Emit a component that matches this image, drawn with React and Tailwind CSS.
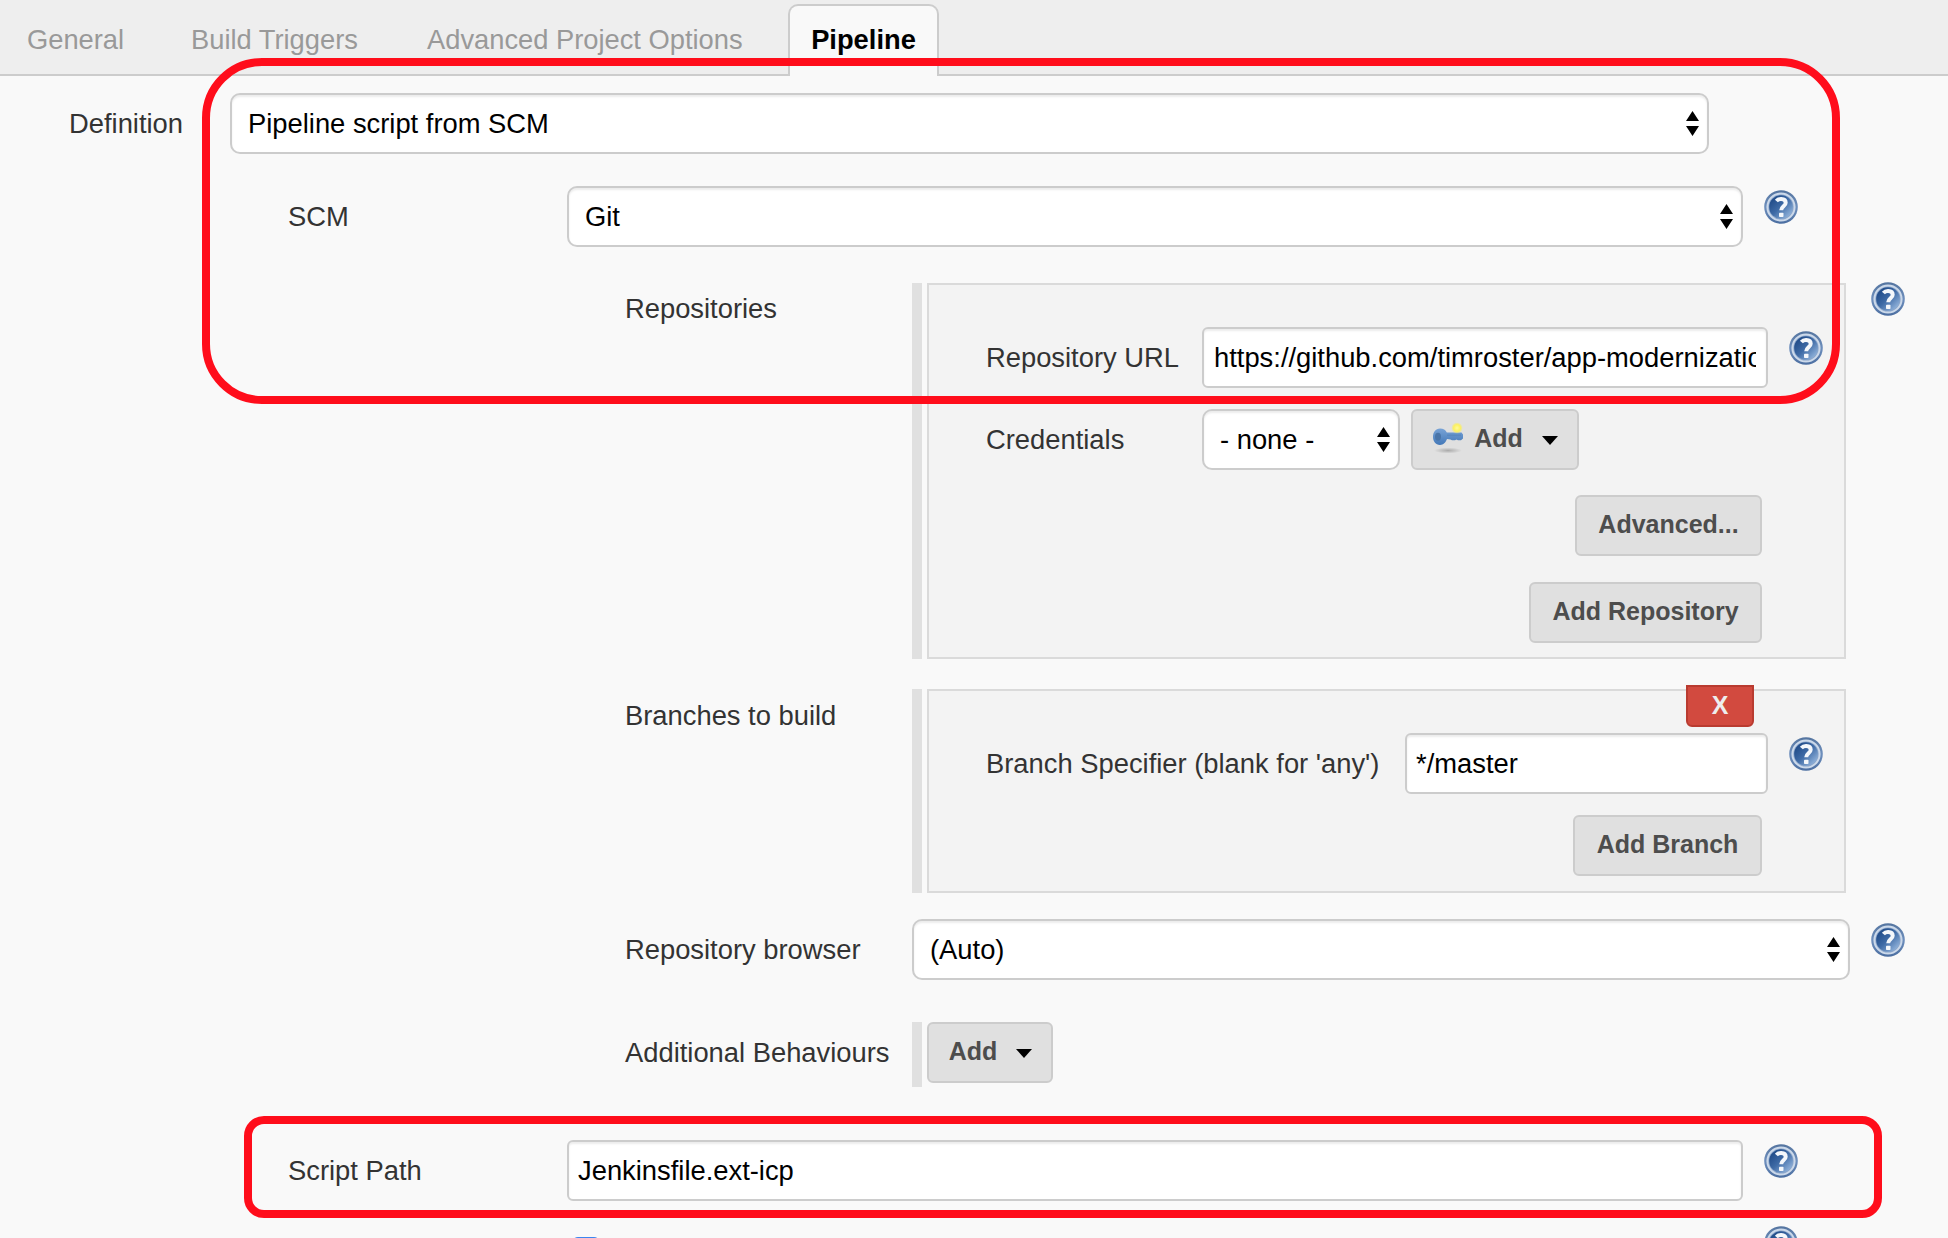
import React from "react";

function HelpIcon({ className = "" }) {
  return (
    <svg className={`size-[34px] shrink-0 ${className}`} viewBox="0 0 34 34">
      <defs>
        <linearGradient id="helpFill" x1="0.15" y1="0.2" x2="0.85" y2="0.9">
          <stop offset="0" stopColor="#244f8c" />
          <stop offset="0.45" stopColor="#3f6ba6" />
          <stop offset="1" stopColor="#8fb1da" />
        </linearGradient>
        <linearGradient id="helpRing" x1="0" y1="0" x2="0" y2="1">
          <stop offset="0" stopColor="#54749f" />
          <stop offset="0.5" stopColor="#6e8fbd" />
          <stop offset="1" stopColor="#4a6da0" />
        </linearGradient>
      </defs>
      <circle cx="17" cy="17" r="16.800" fill="url(#helpRing)" />
      <circle cx="17" cy="17" r="13.600" fill="#8aa5ca" stroke="#ccd9ea" strokeWidth="2" />
      <circle cx="17" cy="17" r="11.800" fill="url(#helpFill)" />
      <path
        d="M12.400 11c1.300-1.500 3-2.200 4.900-2.100 2.700.1 4.400 1.600 4.400 3.800 0 3.600-4.500 3.700-4.500 7.600"
        fill="none"
        stroke="#f4f7fb"
        strokeWidth="4"
      />
      <rect x="15" y="22.800" width="4.500" height="4.200" rx="0.800" fill="#f4f7fb" />
    </svg>
  );
}

function KeyIcon() {
  return (
    <svg className="h-[32px] w-[32px] shrink-0" viewBox="0 0 32 32">
      <defs>
        <radialGradient id="keyShadow">
          <stop offset="0" stopColor="#000" stopOpacity="0.24" />
          <stop offset="1" stopColor="#000" stopOpacity="0" />
        </radialGradient>
        <radialGradient id="keyStar">
          <stop offset="0" stopColor="#fffa9a" />
          <stop offset="0.6" stopColor="#fcf15f" />
          <stop offset="1" stopColor="#f6ec6a" stopOpacity="0.15" />
        </radialGradient>
        <linearGradient id="keyBody" x1="0" y1="0" x2="0" y2="1">
          <stop offset="0" stopColor="#78a3d6" />
          <stop offset="1" stopColor="#4378b8" />
        </linearGradient>
      </defs>
      <ellipse cx="16" cy="28.500" rx="14" ry="3" fill="url(#keyShadow)" />
      <path
        d="M8 6.500c3.400 0 5.600 1.600 6.800 4H29.500l1.500 2v4l-2 1.700h-3l-1.500-.8-1.500.8h-3l-1.500-.8-3.500-.3C13.500 20.800 11.500 23 8 23c-4.500 0-7-3.700-7-8.200S3.500 6.500 8 6.500z"
        fill="url(#keyBody)"
      />
      <ellipse cx="6" cy="14.800" rx="3" ry="4" fill="#4a75a8" />
      <path d="M15 13.300h14" stroke="#5988c0" strokeWidth="1.500" />
      <circle cx="25" cy="6" r="5.600" fill="url(#keyStar)" />
    </svg>
  );
}

function Caret({ className = "" }) {
  return (
    <svg className={`h-[9px] w-[16px] shrink-0 ${className}`} viewBox="0 0 16 9">
      <path d="M0 0h16L8 9z" fill="#000" />
    </svg>
  );
}

function Select({ value, className = "" }) {
  return (
    <div
      className={`flex h-[61px] shrink-0 items-center justify-between rounded-[10px] border-2 border-[#ccc] bg-white pr-[8px] pl-[16px] whitespace-nowrap text-black shadow-[inset_0_2px_2px_rgba(0,0,0,0.075)] ${className}`}
    >
      <span>{value}</span>
      <svg className="h-[25px] w-[13px]" viewBox="0 0 13 25">
        <path d="M0 10L6.500 0L13 10zM0 15L6.500 25L13 15z" fill="#000" />
      </svg>
    </div>
  );
}

function TextBox({ value, className = "" }) {
  return (
    <div
      className={`flex h-[61px] shrink-0 items-center rounded-[6px] border-2 border-[#ccc] bg-white px-[9px] text-black shadow-[inset_0_2px_2px_rgba(0,0,0,0.075)] ${className}`}
    >
      <span className="min-w-0 flex-1 overflow-hidden whitespace-nowrap">{value}</span>
    </div>
  );
}

function Button({ children, className = "" }) {
  return (
    <button
      className={`flex h-[61px] shrink-0 items-center justify-center rounded-[6px] border-2 border-[#ccc] bg-[#e0e0e0] pb-[3px] text-[25px] font-bold whitespace-nowrap text-[#4d4d4d] ${className}`}
    >
      {children}
    </button>
  );
}

function Label({ children, className = "" }) {
  return (
    <div className={`flex shrink-0 items-center pl-px whitespace-nowrap ${className}`}>{children}</div>
  );
}

function Group({ children, className = "" }) {
  return (
    <div className={`flex shrink-0 gap-[5px] ${className}`}>
      <div className="w-[10px] bg-[#e0e0e0]" />
      <div className="w-[919px] border-2 border-[#dadada] bg-[#f3f3f3] pl-[56px]">{children}</div>
    </div>
  );
}

export default function App() {
  return (
    <div className="relative h-[1238px] w-[1948px] overflow-hidden bg-[#f9f9f9] font-['Liberation_Sans',Arial,sans-serif] text-[27.35px] leading-[32px] text-[#333]">
      <nav className="flex h-[76px] items-end border-b-2 border-[#ccc] bg-[#eee] pl-[27px] text-[27.3px] whitespace-nowrap text-[#999]">
        <div className="h-[50px] w-[164px]">General</div>
        <div className="h-[50px] w-[236px]">Build Triggers</div>
        <div className="h-[50px] w-[361px]">Advanced Project Options</div>
        <div className="-mb-[2px] h-[72px] w-[151px] rounded-t-[10px] border-2 border-b-0 border-[#ccc] bg-[#f9f9f9] pt-[18px] text-center font-bold text-black">
          Pipeline
        </div>
      </nav>

      <main className="flex flex-col">
        <div className="mt-[17px] flex pl-[68px]">
          <Label className="h-[61px] w-[162px]">Definition</Label>
          <Select value="Pipeline script from SCM" className="w-[1479px]" />
        </div>

        <div className="mt-[32px] flex pl-[287px]">
          <Label className="h-[61px] w-[280px]">SCM</Label>
          <Select value="Git" className="w-[1176px]" />
          <HelpIcon className="mt-[4px] ml-[21px]" />
        </div>

        <div className="mt-[36px] flex pl-[624px]">
          <Label className="h-[52px] w-[288px]">Repositories</Label>
          <Group className="h-[376px]">
            <div className="mt-[42px] flex">
              <Label className="h-[61px] w-[217px]">Repository URL</Label>
              <TextBox
                value="https://github.com/timroster/app-modernization"
                className="w-[566px] pr-[10px] pl-[10px]"
              />
              <HelpIcon className="mt-[4px] ml-[21px]" />
            </div>
            <div className="mt-[21px] flex">
              <Label className="h-[61px] w-[217px]">Credentials</Label>
              <Select value="- none -" className="w-[198px]" />
              <Button className="ml-[11px] w-[168px]">
                <KeyIcon />
                <span className="ml-[10px]">Add</span>
                <Caret className="mt-[5px] ml-[19px]" />
              </Button>
            </div>
            <div className="mt-[25px] flex w-[777px] flex-col items-end gap-[26px]">
              <Button className="w-[187px]">Advanced...</Button>
              <Button className="w-[233px]">Add Repository</Button>
            </div>
          </Group>
          <HelpIcon className="-mt-px ml-[25px]" />
        </div>

        <div className="mt-[30px] flex pl-[624px]">
          <Label className="h-[53px] w-[288px]">Branches to build</Label>
          <Group className="h-[204px]">
            <div className="-mt-[6px] flex w-[769px] justify-end">
              <button className="h-[42px] w-[68px] rounded-b-[6px] border-2 border-[#b93b30] bg-[#d24a3f] pb-[2px] text-[25px] leading-[34px] font-bold text-[#eee]">
                X
              </button>
            </div>
            <div className="mt-[6px] flex">
              <Label className="h-[61px] w-[420px]">Branch Specifier (blank for 'any')</Label>
              <TextBox value="*/master" className="w-[363px]" />
              <HelpIcon className="mt-[4px] ml-[21px]" />
            </div>
            <div className="mt-[21px] flex w-[777px] justify-end">
              <Button className="w-[189px]">Add Branch</Button>
            </div>
          </Group>
        </div>

        <div className="mt-[26px] flex pl-[624px]">
          <Label className="h-[61px] w-[288px]">Repository browser</Label>
          <Select value="(Auto)" className="w-[938px]" />
          <HelpIcon className="mt-[4px] ml-[21px]" />
        </div>

        <div className="mt-[42px] flex pl-[624px]">
          <Label className="h-[61px] w-[288px]">Additional Behaviours</Label>
          <div className="h-[65px] w-[10px] bg-[#e0e0e0]" />
          <Button className="ml-[5px] w-[126px]">
            <span className="ml-px">Add</span>
            <Caret className="mt-[5px] ml-[19px]" />
          </Button>
        </div>

        <div className="mt-[53px] flex pl-[287px]">
          <Label className="h-[61px] w-[280px]">Script Path</Label>
          <TextBox value="Jenkinsfile.ext-icp" className="w-[1176px]" />
          <HelpIcon className="mt-[4px] ml-[21px]" />
        </div>

        <div className="mt-[25px] flex pl-[572px]">
          <div className="mt-[10.500px] size-[28px] shrink-0 rounded-[6px] bg-[#3b86f0]" />
          <HelpIcon className="ml-[1164px]" />
        </div>
      </main>

      <div className="absolute top-[58px] left-[202px] h-[346px] w-[1638px] rounded-[60px] border-8 border-[#ff0d1b]" />
      <div className="absolute top-[1116px] left-[244px] h-[102px] w-[1638px] rounded-[20px] border-8 border-[#ff0d1b]" />
    </div>
  );
}
